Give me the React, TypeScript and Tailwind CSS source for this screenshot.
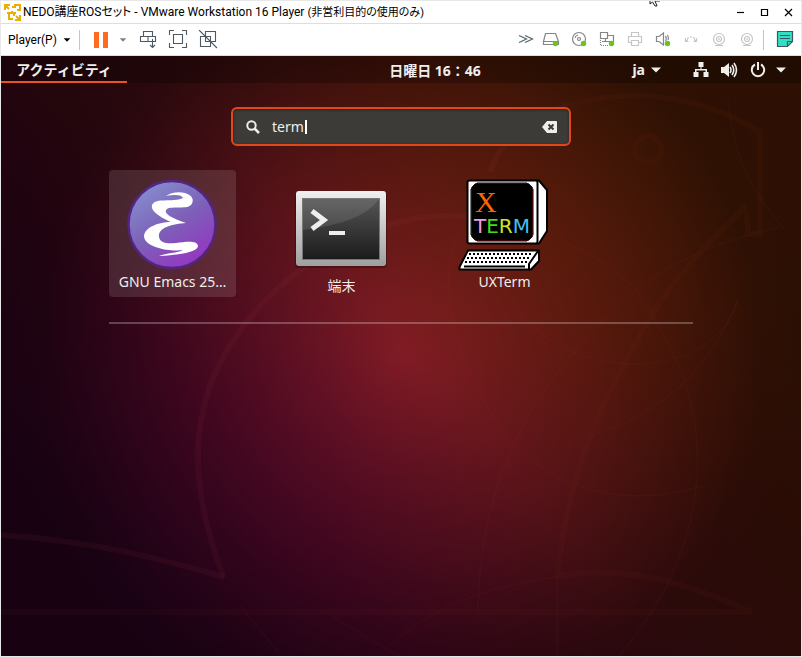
import type { ReactNode } from "react";

const jp = "font-['Noto_Sans','Noto_Sans_CJK_JP',sans-serif]";

function Wallpaper() {
  return (
    <svg className="absolute inset-0 h-full w-full" viewBox="1 56 800 600" preserveAspectRatio="none" aria-hidden="true">
      <defs>
        <linearGradient id="hue" gradientUnits="userSpaceOnUse" x1="120" y1="600" x2="680" y2="120">
          <stop offset="0" stopColor="#4a0538" />
          <stop offset="0.25" stopColor="#620a30" />
          <stop offset="0.52" stopColor="#811c24" />
          <stop offset="0.75" stopColor="#832612" />
          <stop offset="1" stopColor="#8c330a" />
        </linearGradient>
        <radialGradient id="shade" gradientUnits="userSpaceOnUse" cx="400" cy="355" r="400">
          <stop offset="0" stopColor="#000" stopOpacity="0" />
          <stop offset="0.5" stopColor="#000" stopOpacity="0.34" />
          <stop offset="0.9" stopColor="#000" stopOpacity="0.66" />
          <stop offset="1" stopColor="#000" stopOpacity="0.68" />
        </radialGradient>
      </defs>
      <rect x="0" y="55" width="802" height="602" fill="url(#hue)" />
      <rect x="0" y="55" width="802" height="602" fill="url(#shade)" />
      <g fill="none" stroke="#b84050" strokeOpacity="0.08" strokeWidth="6">
        <path d="M224 578C190 490 185 410 235 338C270 285 330 240 400 222Q435 213 470 217M490 172C505 130 535 114 568 106" />
        <path d="M0 535C90 541 160 558 224 577" />
      </g>
      <g fill="none" stroke="#b84030" strokeOpacity="0.05" strokeWidth="6">
        <path d="M568 106C630 86 700 95 760 132V234H748Q748 218 744 208C700 250 670 285 652 315C600 400 565 480 558 576C630 564 690 585 752 612H0" />
        <circle cx="648" cy="149" r="13" />
      </g>
      <g fill="none" stroke="#c04040" strokeOpacity="0.05" strokeWidth="2">
        <path d="M465 215C435 270 446 350 505 434C560 500 640 505 702 486" />
        <path d="M490 250C510 330 570 364 636 364C690 362 725 340 738 300" />
        <path d="M780 227C720 240 660 265 620 305C560 360 480 450 478 610" />
        <path d="M640 300C720 400 720 540 618 657M590 436C660 415 710 370 738 300" />
        <path d="M390 645C440 600 500 585 557 577M240 605L282 657M330 615L400 657M557 577V657" />
        <path d="M728 100C735 170 760 200 785 230M560 240C610 260 640 290 655 315" />
      </g>
    </svg>
  );
}

function Tool({ label, children }: { label: string; children: ReactNode }) {
  return (
    <button type="button" aria-label={label} className="flex h-6 w-5 shrink-0 items-center justify-center">
      <svg width="20" height="20" viewBox="0 1 20 20" fill="none" stroke="#4d5a64" strokeWidth="1.1" aria-hidden="true">
        {children}
      </svg>
    </button>
  );
}

function Device({ label, faded, on, children }: { label: string; faded?: boolean; on?: boolean; children: ReactNode }) {
  return (
    <button type="button" aria-label={label} className="flex h-6 w-7 shrink-0 items-center justify-center">
      <svg width="18" height="18" viewBox="0 1 18 18" fill="none" stroke={faded ? "#c6c6c6" : "#858585"} strokeWidth="1.2" aria-hidden="true">
        {children}
        {on && <circle cx="13.5" cy="13.5" r="2.7" fill="#6cc417" stroke="none" />}
      </svg>
    </button>
  );
}

function Caret({ className }: { className: string }) {
  return (
    <svg className={className} width="10" height="6" viewBox="0 0 10 6" fill="currentColor" aria-hidden="true">
      <path d="M0 .5H10L5 5.5Z" />
    </svg>
  );
}

function TitleBar() {
  return (
    <header className="relative flex h-6 items-center border-t border-b border-t-[#e8e8e8] border-b-[#dedede] bg-white pr-px pl-[3px]">
      <svg width="17" height="17" viewBox="0 0 17 17" fill="none" stroke="#e9b000" strokeWidth="2" aria-hidden="true">
        <path d="M1 6V1H6M1 1L5 5M8 3H11V1H16V6H13M3 9H8V7M5 10V15H9M10 12V9H12M12 12L16 16M16 11V16H11" />
      </svg>
      <h1 className="ml-0.5 text-xs font-normal whitespace-nowrap text-black [font-feature-settings:'palt'] font-['Roboto','Noto_Sans_CJK_JP',sans-serif]">
        NEDO講座ROSセット - VMware Workstation 16 Player <span className="text-[11px]">(非営利目的の使用のみ)</span>
      </h1>
      <svg className="absolute top-0 left-[648px]" width="12" height="6" viewBox="0 0 12 6" fill="#fff" stroke="#222" aria-hidden="true">
        <path d="M1 -3V3L3.500 1L6 5H8L6 0H11" />
      </svg>
      <div className="ml-auto flex text-black">
        {[
          ["最小化", "M1 5.500H8"],
          ["最大化", "M1.500 2.500H7.500V8.500H1.500Z"],
          ["閉じる", "M1 2L8 9M8 2L1 9"],
        ].map(([label, d]) => (
          <button key={label} type="button" aria-label={label} className="flex h-5 w-6 items-center justify-center">
            <svg width="9" height="11" viewBox="0 0 9 11" fill="none" stroke="currentColor" strokeWidth="1.2" aria-hidden="true">
              <path d={d} />
            </svg>
          </button>
        ))}
      </div>
    </header>
  );
}

function ToolBar() {
  return (
    <div className="flex h-8 items-center border-b border-[#dedede] bg-white pr-1.5 pl-[7px]">
      <button type="button" className="flex items-center text-xs text-black font-['Roboto',sans-serif]">
        Player(P)
        <Caret className="ml-1.5 h-1 w-2" />
      </button>
      <span className="ml-2 h-5 w-px bg-[#c4c4c4]" />
      <button type="button" aria-label="一時停止" className="ml-3.5 flex gap-1">
        <span className="h-4 w-[5px] bg-[#ff6a1f]" />
        <span className="h-4 w-[5px] bg-[#ff6a1f]" />
      </button>
      <button type="button" aria-label="電源メニュー" className="ml-[11px] text-[#808080]">
        <Caret className="h-1 w-2" />
      </button>
      <div className="ml-[11px] flex gap-2.5">
        <Tool label="Ctrl+Alt+Delを送信">
          <path d="M5.500 7.500V2.500H14.500V7.500M2.500 7.500H17.500V12.500H2.500ZM10 7.500V12.500M14.500 10V18.500M12 16L14.500 18.500L17 16" />
        </Tool>
        <Tool label="全画面">
          <path d="M1.500 6V1.500H6M14 1.500H18.500V6M18.500 14V18.500H14M6 18.500H1.500V14M5.500 5.500H14.500V14.500H5.500Z" />
        </Tool>
        <Tool label="ユニティ">
          <path d="M7.500 2.500H17.500V12.500H7.500ZM2.500 7.500H12.500V17.500H2.500ZM1 1L19 19" />
        </Tool>
      </div>
      <div className="ml-auto flex items-center">
        <button type="button" aria-label="デバイスを隠す" className="flex h-6 w-5 items-center justify-center">
          <svg width="18" height="18" viewBox="0 1 18 18" fill="none" stroke="#52616c" strokeWidth="1.2" aria-hidden="true">
            <path d="M1 5.500L8.500 9L1 12.500M7 5.500L14.500 9L7 12.500" />
          </svg>
        </button>
        <Device label="ハードディスク" on>
          <path d="M3.500 3.500H13.500L16.500 11.500H1.500ZM1.500 11.500V14.500H16.500V11.500" />
        </Device>
        <Device label="CD/DVD" on>
          <circle cx="9" cy="9" r="6.500" />
          <circle cx="9" cy="9" r="1.500" />
          <path d="M5 8Q5.500 5.500 8 5" />
        </Device>
        <Device label="ネットワーク" on>
          <path d="M2.500 2.500H9.500V8.500H2.500ZM9.500 5.500H15.500V11.500H7.500V8.500M4 11.500H7" />
          <path strokeDasharray="1 1" d="M2.500 10V15.500H10" />
        </Device>
        <Device label="プリンター" faded>
          <path d="M5.500 6V2.500H12.500V6M5 12.500H2.500V6.500H15.500V12.500H13M5.500 10.500H12.500V15.500H5.500Z" />
        </Device>
        <Device label="サウンド" on>
          <path d="M2.500 6.500H5L9.500 3V15L5 11.500H2.500ZM11.500 6Q13 9 11.500 11M13.500 5Q15 8 14 10" />
        </Device>
        <Device label="シリアルポート" faded>
          <path d="M5 8.500L7 7.500M8 7H10M11 7.500L13 8.500M3.500 8V11.500H6.500M4 11L6 9.500M14.500 8V11.500H11.500M14 11L12 9.500" />
        </Device>
        <Device label="カメラ 1" faded>
          <circle cx="9" cy="9" r="5.500" />
          <circle cx="9" cy="9" r="2.500" />
          <path d="M5 15.500H13M9 8V10" />
        </Device>
        <Device label="カメラ 2" faded>
          <circle cx="9" cy="9" r="5.500" />
          <circle cx="9" cy="9" r="2.500" />
          <path d="M5 15.500H13M9 8V10" />
        </Device>
      </div>
      <span className="ml-0.5 h-5 w-px bg-[#c4c4c4]" />
      <button type="button" aria-label="メモ" className="ml-[11px] flex h-6 w-5 items-center justify-center">
        <svg width="18" height="18" viewBox="0 1 18 18" fill="#2fe0c4" stroke="#43545c" strokeWidth="1.200" aria-hidden="true">
          <path d="M1.500 1.500H16.500V11.500L11.500 16.500H1.500ZM11.500 16.500V11.500H16.500M4 5.500H14M4 8.500H14" />
        </svg>
      </button>
    </div>
  );
}

function TopPanel() {
  return (
    <nav className={`relative grid h-[27px] grid-cols-[1fr_auto_1fr] items-center bg-black/25 text-sm font-bold text-[#eeeeec] ${jp}`}>
      <button type="button" className="h-[27px] w-[126px] justify-self-start border-b-2 border-[#e95420] pt-0.5 text-center">
        アクティビティ
      </button>
      <time className="pt-0.5 pl-[68px]">日曜日 16：46</time>
      <div className="flex items-center justify-self-end pr-[15px]">
        <button type="button" className="flex items-center">
          ja
          <Caret className="ml-1.5" />
        </button>
        <button type="button" aria-label="システムメニュー" className="ml-8 flex items-center">
          <svg width="16" height="16" viewBox="0 0 16 16" fill="currentColor" aria-hidden="true">
            <path d="M5.500 0H10.500V5H8.500V7H14V10H15.500V15H10.500V10H12.500V8.500H3.500V10H5.500V15H.500V10H2V7H7.500V5H5.500Z" />
          </svg>
          <svg className="ml-3" width="17" height="16" viewBox="0 0 17 16" fill="none" stroke="currentColor" strokeWidth="1.600" aria-hidden="true">
            <path fill="currentColor" stroke="none" d="M0 5H3L8 1V15L3 11H0Z" />
            <path d="M9 5Q11 8 9 11M11 3Q14.500 8 11 13M13 1Q18 8 13 15" />
          </svg>
          <svg className="ml-3" width="16" height="16" viewBox="0 0 16 16" fill="none" stroke="currentColor" strokeWidth="2" aria-hidden="true">
            <path d="M5 2.500A6.200 6.200 0 1 0 11 2.500M8 0V8" />
          </svg>
          <Caret className="ml-2.5" />
        </button>
      </div>
    </nav>
  );
}

function EmacsIcon() {
  return (
    <svg width="96" height="96" viewBox="0 0 96 96" aria-hidden="true">
      <defs>
        <linearGradient id="emacs" x1="0.2" y1="0.1" x2="0.75" y2="0.95">
          <stop offset="0" stopColor="#8489cc" />
          <stop offset="0.5" stopColor="#7d5fb8" />
          <stop offset="1" stopColor="#9437c2" />
        </linearGradient>
      </defs>
      <circle cx="47" cy="48.500" r="43.500" fill="url(#emacs)" stroke="#532581" strokeWidth="2.500" />
      <path fill="#fff" d="M49 20C53 17 61 15 68 17C75 19 78 24 74 29C69 34 52 29 49 34C47 38 55 42 69 47C56 48 41 51 42 61C43 67 50 68 59 67C69 66 80 64 81 70C81 76 62 79 42 80C49 77 61 77 66 74C55 76 27 72 27 60C28 51 42 46 54 46C47 43 33 36 35 29C39 21 55 27 66 22C64 18 56 19 49 20Z" transform="translate(-8 0)" />
    </svg>
  );
}

function TerminalIcon() {
  return (
    <svg width="96" height="96" viewBox="0 0 96 96" aria-hidden="true">
      <defs>
        <linearGradient id="frame" x2="0" y2="1">
          <stop offset="0" stopColor="#f0f0f0" />
          <stop offset="1" stopColor="#9f9f9f" />
        </linearGradient>
        <linearGradient id="screen" x2="0" y2="1">
          <stop offset="0" stopColor="#555" />
          <stop offset="1" stopColor="#1b1b1b" />
        </linearGradient>
      </defs>
      <rect x="1" y="12" width="92" height="76" rx="4" fill="#000" opacity="0.25" />
      <rect x="2" y="11" width="90" height="75" rx="3" fill="url(#frame)" />
      <rect x="8.500" y="18.500" width="77" height="61" fill="url(#screen)" stroke="#777" />
      <path d="M9 19H85Q69 43 9 50Z" fill="#fff" opacity="0.1" />
      <path d="M18 31L30 40L18 49" fill="none" stroke="#eee" strokeWidth="5" />
      <path d="M35 51H51V55H35Z" fill="#eee" />
    </svg>
  );
}

function XTermIcon() {
  return (
    <svg width="96" height="96" viewBox="1 0 96 96" aria-hidden="true">
      <g stroke="#000" strokeWidth="2" strokeLinejoin="round">
        <path d="M80 4.500H83L91 14V55L83 67.500H80Z" fill="#fff" />
        <rect x="11.500" y="4.500" width="70" height="63" rx="2" fill="#fff" />
        <path d="M21 7H71L77 13V59L71 65H21L15 59V13Z" strokeWidth="1" />
        <path d="M12 74.500H83V85L75 93.500H3.500V91Z" fill="#fff" />
        <path d="M82 75L73 88V93M8 90.500H69" fill="none" />
      </g>
      <path d="M19.500 7.500H72.500L76.500 11.500V60.500L72.500 64.500H19.500L15.500 60.500V11.500Z" fill="none" stroke="#3a0808" />
      <path d="M13 78H77M11 82H75M9 86H72" stroke="#000" strokeWidth="2" strokeDasharray="2 2" />
      <text x="19" y="36" fill="#ff6600" fontSize="30" fontFamily="Liberation Serif">X</text>
      <text x="18" y="57" fontSize="20" fontFamily="DejaVu Sans">
        <tspan fill="#ee9be0">T</tspan><tspan fill="#42df17">E</tspan><tspan fill="#c6e52c">R</tspan><tspan fill="#42bff0">M</tspan>
      </text>
    </svg>
  );
}

function AppTile({ name, selected, low, children }: { name: string; selected?: boolean; low?: boolean; children: ReactNode }) {
  return (
    <button
      type="button"
      className={`flex h-[127px] w-[127px] flex-col items-center rounded text-sm leading-5 text-[#eeeeec] ${low ? "pt-2.5" : "pt-1.5"} ${selected ? "bg-white/12" : ""}`}
    >
      {children}
      <span className="w-full px-2 whitespace-nowrap">{name}</span>
    </button>
  );
}

export default function App() {
  return (
    <div className="flex min-h-screen flex-col border-x border-b border-[#e8e8e8] bg-white">
      <TitleBar />
      <ToolBar />
      <main className={`relative flex grow flex-col bg-[#24050b] ${jp}`}>
        <Wallpaper />
        <TopPanel />
        <div className="relative px-[108px] pt-6">
          <label className="mx-auto flex h-[39px] w-[340px] items-center rounded-md border-2 border-[#e0481a] bg-[#3d3b37] pr-3 pl-[13px] text-[#eeeeec] shadow-[inset_0_1px_3px_rgba(0,0,0,0.4)]">
            <svg width="14" height="14" viewBox="0 0 14 14" fill="none" stroke="currentColor" strokeWidth="2" aria-hidden="true">
              <circle cx="5.500" cy="5.500" r="4.200" />
              <path strokeWidth="2.500" d="M8.500 8.500L13 13" />
            </svg>
            <span className="relative ml-3 flex grow items-center">
              <input aria-label="検索" defaultValue="term" className="w-full bg-transparent text-sm outline-none" />
              <span className="absolute left-[33px] h-3.5 w-0.5 bg-white" />
            </span>
            <button type="button" aria-label="クリア">
              <svg width="15" height="12" viewBox="0 0 15 12" aria-hidden="true">
                <path fill="currentColor" d="M5 0H14Q15 0 15 1V11Q15 12 14 12H5L0 6Z" />
                <path stroke="#3d3b37" strokeWidth="2" d="M6.500 3.500L11.500 8.500M11.500 3.500L6.500 8.500" />
              </svg>
            </button>
          </label>
          <div className="mt-6 grid grid-cols-[169px_163px_127px]">
            <AppTile name="GNU Emacs 25…" selected>
              <EmacsIcon />
            </AppTile>
            <AppTile name="端末" low>
              <TerminalIcon />
            </AppTile>
            <AppTile name="UXTerm">
              <XTermIcon />
            </AppTile>
          </div>
          <hr className="mt-[25px] border-t-2 border-white/25" />
        </div>
      </main>
    </div>
  );
}
